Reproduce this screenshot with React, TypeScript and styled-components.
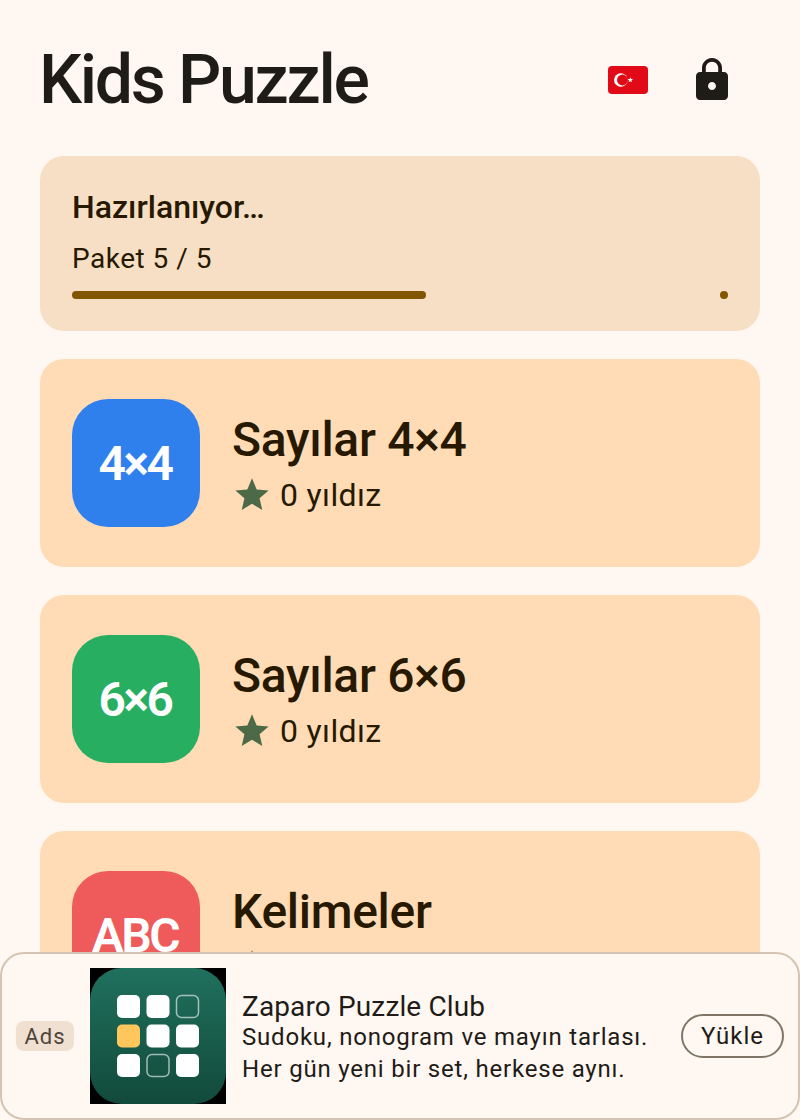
import styled, { createGlobalStyle } from 'styled-components';

const GlobalStyle = createGlobalStyle`
  html, body {
    margin: 0;
    height: 100%;
    overflow: hidden;
    background: #fff7f2;
    font-family: Roboto, 'Noto Sans', sans-serif;
    color: #1f1b16;
  }
`;

const PUZZLES = [
  { id: 'n4', badge: '4×4', name: 'Sayılar 4×4', color: '#2f80ed' },
  { id: 'n6', badge: '6×6', name: 'Sayılar 6×6', color: '#27ae60' },
  { id: 'abc', badge: 'ABC', name: 'Kelimeler', color: '#ef5a5a' },
];

const CELLS = [1, 1, 0, 2, 1, 1, 1, 0, 1];

const TurkeyFlag = () => (
  <FlagSvg viewBox="0 0 40 28">
    <rect width="40" height="28" rx="4" fill="#e30a17" />
    <circle cx="12.8" cy="14" r="6.8" fill="#fff" />
    <circle cx="14.4" cy="14" r="5.4" fill="#e30a17" />
    <polygon
      points="22.3,11.2 23,13.1 25,13.1 23.4,14.4 24,16.3 22.3,15.2 20.6,16.3 21.2,14.4 19.6,13.1 21.6,13.1"
      fill="#fff"
    />
  </FlagSvg>
);

const LockIcon = () => (
  <svg width="48" height="48" viewBox="0 0 24 24" fill="#1f1b16">
    <path d="M18 8h-1V6c0-2.76-2.24-5-5-5S7 3.24 7 6v2H6c-1.1 0-2 .9-2 2v10c0 1.1.9 2 2 2h12c1.1 0 2-.9 2-2V10c0-1.1-.9-2-2-2zm-6 9c-1.1 0-2-.9-2-2s.9-2 2-2 2 .9 2 2-.9 2-2 2zm3.1-9H8.9V6c0-1.71 1.39-3.1 3.1-3.1 1.71 0 3.1 1.39 3.1 3.1v2z" />
  </svg>
);

const StarIcon = () => (
  <svg width="40" height="40" viewBox="0 0 24 24" fill="#4c6a47">
    <path d="M12 17.27L18.18 21l-1.64-7.03L22 9.24l-7.19-.61L12 2 9.19 8.63 2 9.24l5.46 4.73L5.82 21z" />
  </svg>
);

const AppLogo = () => (
  <svg width="136" height="136" viewBox="0 0 136 136">
    <defs>
      <linearGradient id="logoBg" x1="0" y1="0" x2="0" y2="1">
        <stop offset="0" stopColor="#20705d" />
        <stop offset="1" stopColor="#124a3b" />
      </linearGradient>
    </defs>
    <rect width="136" height="136" fill="#000" />
    <rect width="136" height="136" rx="32" fill="url(#logoBg)" />
    {CELLS.map((cell, i) => {
      const x = 27 + (i % 3) * 29.5;
      const y = 27 + Math.floor(i / 3) * 29.5;
      if (cell === 0) {
        return (
          <rect
            key={i}
            x={x + 0.5}
            y={y + 0.5}
            width="22"
            height="22"
            rx="5"
            fill="none"
            stroke="#fff"
            strokeOpacity="0.6"
            strokeWidth="1.5"
          />
        );
      }
      return <rect key={i} x={x} y={y} width="23" height="23" rx="5" fill={cell === 2 ? '#ffc65c' : '#fff'} />;
    })}
  </svg>
);

const App = () => {
  return (
    <Page>
      <GlobalStyle />
      <Header>
        <Title>Kids Puzzle</Title>
        <HeaderActions>
          <TurkeyFlag />
          <LockIcon />
        </HeaderActions>
      </Header>
      <Content>
        <ProgressCard>
          <ProgressTitle>Hazırlanıyor…</ProgressTitle>
          <ProgressLabel>Paket 5 / 5</ProgressLabel>
          <ProgressTrack>
            <ProgressBar />
            <ProgressDot />
          </ProgressTrack>
        </ProgressCard>
        {PUZZLES.map((item) => (
          <PuzzleCard key={item.id}>
            <Badge $color={item.color}>{item.badge}</Badge>
            <PuzzleInfo>
              <PuzzleName>{item.name}</PuzzleName>
              <StarRow>
                <StarIcon />
                <StarText>0 yıldız</StarText>
              </StarRow>
            </PuzzleInfo>
          </PuzzleCard>
        ))}
      </Content>
      <AdBanner>
        <AdTag>Ads</AdTag>
        <AppLogo />
        <AdText>
          <AdTitle>Zaparo Puzzle Club</AdTitle>
          <AdLine>Sudoku, nonogram ve mayın tarlası.</AdLine>
          <AdLine>Her gün yeni bir set, herkese aynı.</AdLine>
        </AdText>
        <InstallButton>Yükle</InstallButton>
      </AdBanner>
    </Page>
  );
};

const Page = styled.div`
  height: 1120px;
  overflow: hidden;
`;

const Header = styled.header`
  height: 156px;
  box-sizing: border-box;
  padding: 4px 40px 0 39px;
  display: flex;
  align-items: center;
  justify-content: space-between;
`;

const Title = styled.h1`
  margin: 0;
  font-size: 68px;
  line-height: 80px;
  font-weight: 500;
  letter-spacing: -2.3px;
  color: #1f1b16;
`;

const HeaderActions = styled.div`
  display: flex;
  align-items: center;
  gap: 40px;
  margin-right: 24px;
`;

const FlagSvg = styled.svg`
  width: 40px;
  height: 28px;
`;

const Content = styled.main`
  padding: 0 40px;
  display: flex;
  flex-direction: column;
  gap: 28px;
`;

const ProgressCard = styled.section`
  height: 175px;
  box-sizing: border-box;
  padding: 31px 32px 0;
  border-radius: 24px;
  background: #f6dfc4;
  color: #271900;
`;

const ProgressTitle = styled.div`
  font-size: 32px;
  line-height: 40px;
  font-weight: 500;
`;

const ProgressLabel = styled.div`
  margin-top: 12px;
  font-size: 28px;
  line-height: 40px;
  letter-spacing: 0.5px;
`;

const ProgressTrack = styled.div`
  margin-top: 12px;
  height: 8px;
  display: flex;
  justify-content: space-between;
`;

const ProgressBar = styled.div`
  width: 354px;
  border-radius: 4px;
  background: #825500;
`;

const ProgressDot = styled.div`
  width: 8px;
  border-radius: 50%;
  background: #825500;
`;

const PuzzleCard = styled.article`
  height: 208px;
  box-sizing: border-box;
  padding: 40px 32px;
  flex-shrink: 0;
  display: flex;
  align-items: center;
  gap: 32px;
  border-radius: 24px;
  background: #ffdcb5;
  color: #271900;
`;

const Badge = styled.div<{ $color: string }>`
  width: 128px;
  height: 128px;
  flex-shrink: 0;
  display: flex;
  align-items: center;
  justify-content: center;
  border-radius: 36px;
  background: ${(p) => p.$color};
  color: #fff;
  font-size: 48px;
  font-weight: 600;
  letter-spacing: -2.4px;
  padding-right: 2px;
  box-sizing: border-box;
`;

const PuzzleInfo = styled.div`
  display: flex;
  flex-direction: column;
`;

const PuzzleName = styled.div`
  margin-bottom: 6px;
  font-size: 48px;
  line-height: 58px;
  font-weight: 500;
  letter-spacing: -0.3px;
`;

const StarRow = styled.div`
  display: flex;
  align-items: center;
  gap: 8px;
`;

const StarText = styled.span`
  font-size: 32px;
  line-height: 40px;
  letter-spacing: 0.35px;
`;

const AdBanner = styled.aside`
  position: fixed;
  left: 0;
  right: 0;
  bottom: 0;
  height: 168px;
  box-sizing: border-box;
  padding: 0 14px;
  display: flex;
  align-items: center;
  border: 2px solid #d3c4b4;
  border-radius: 24px;
  background: #fff7f2;
`;

const AdTag = styled.span`
  flex-shrink: 0;
  width: 58px;
  height: 30px;
  margin-right: 16px;
  display: flex;
  align-items: center;
  justify-content: center;
  border-radius: 8px;
  background: #efe0d2;
  color: #4f4539;
  font-size: 22px;
  letter-spacing: 1px;
`;

const AdText = styled.div`
  flex: 1;
  min-width: 0;
  margin-left: 16px;
  padding-top: 6px;
`;

const AdTitle = styled.div`
  font-size: 28px;
  line-height: 28px;
  letter-spacing: 0.13px;
`;

const AdLine = styled.div`
  font-size: 24px;
  line-height: 32px;
  letter-spacing: 0.8px;
`;

const InstallButton = styled.button`
  flex-shrink: 0;
  width: 103px;
  height: 44px;
  padding: 0;
  border: 2px solid #807567;
  border-radius: 22px;
  background: transparent;
  color: #1f1b16;
  font-family: inherit;
  font-size: 24px;
  letter-spacing: 1px;
`;

export default App;
